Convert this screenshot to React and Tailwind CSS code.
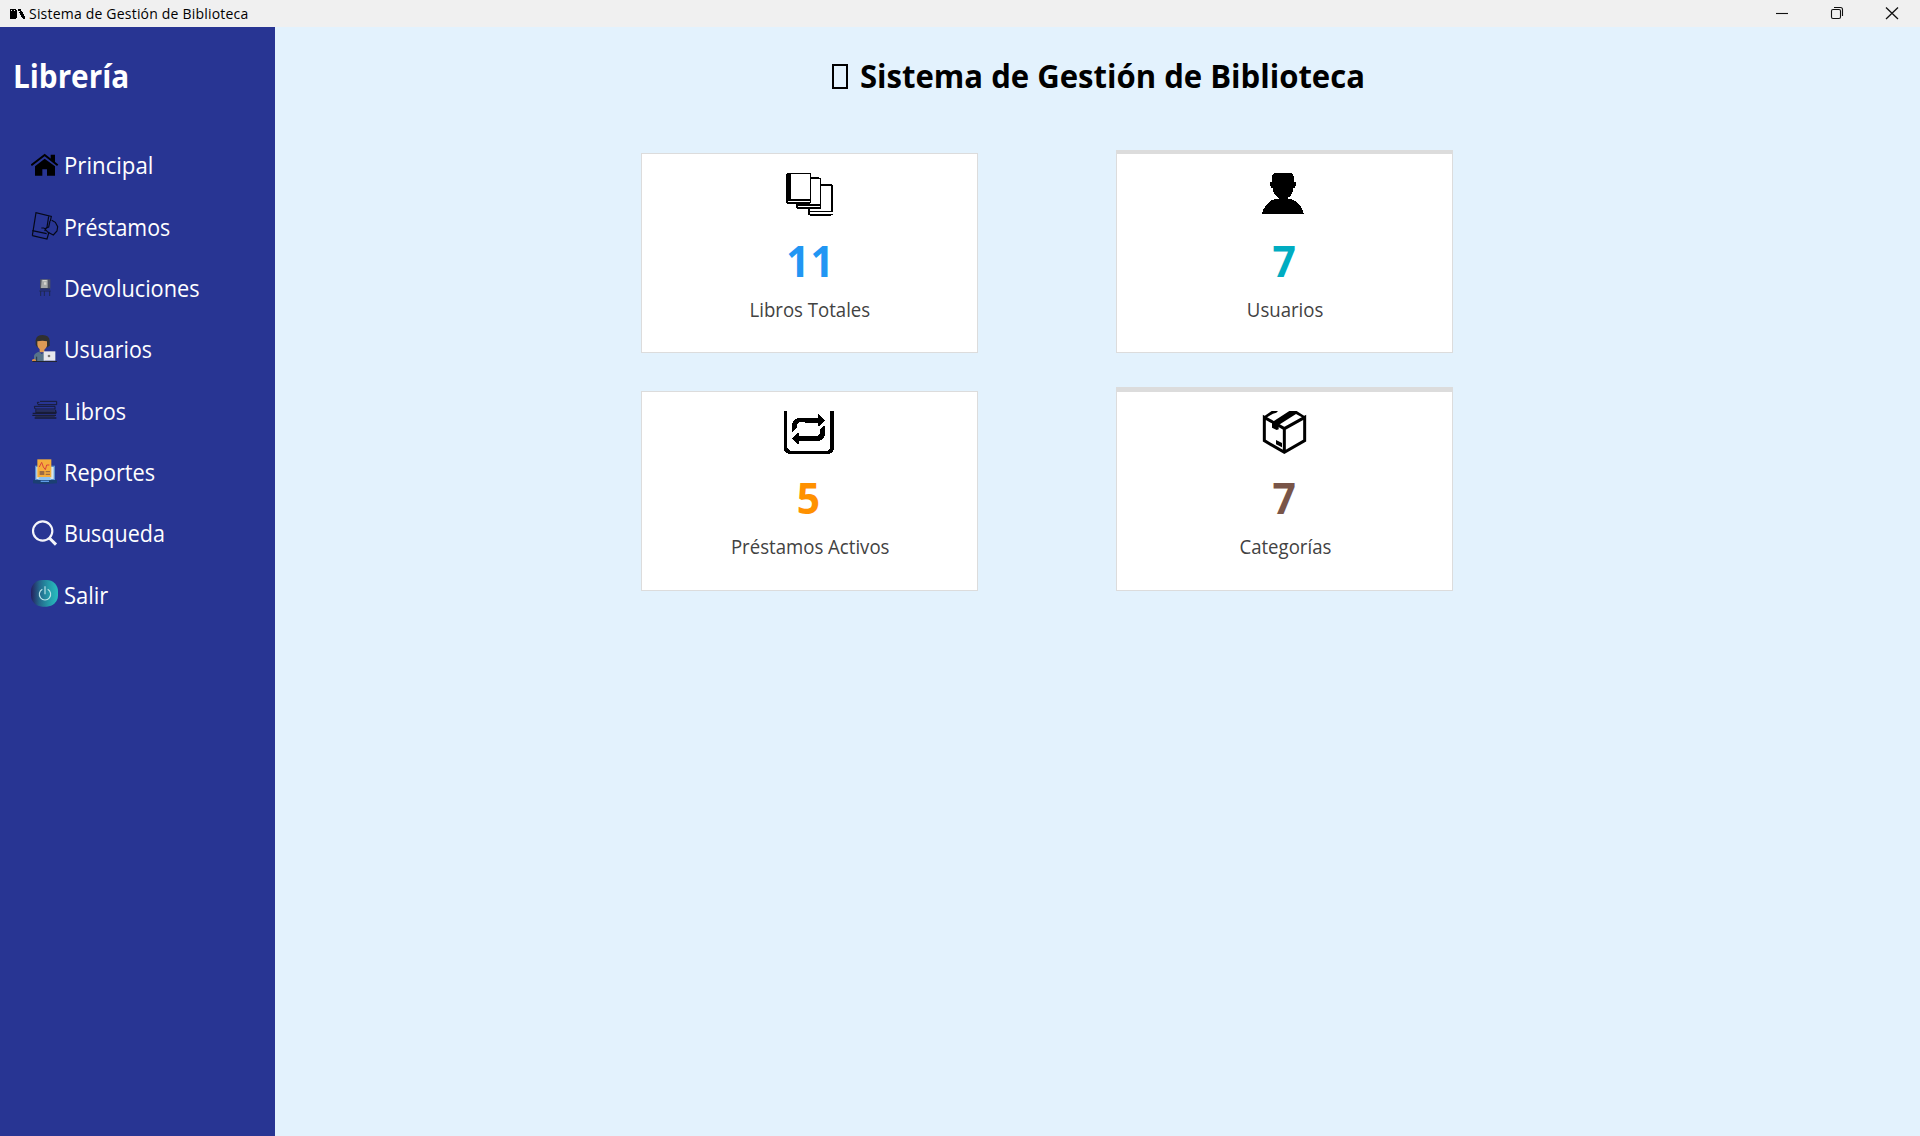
function HomeIcon() {
  return (
    <svg className="size-7 shrink-0" viewBox="93 33 84 84">
      <path d="M94 76 L134 45 L173 76" fill="none" stroke="#000" strokeWidth="6" />
      <path d="M152 44h13v24l-13-11z" />
      <path d="M105 79 L134 56 L165 79 V107 H141 V88 H127 V107 H105z" />
    </svg>
  );
}

function LoanIcon() {
  return (
    <svg className="size-7 shrink-0" viewBox="93 217 84 84" fill="none" stroke="#050818" strokeWidth="3.500">
      <path d="M97 288 L108 219 L154 230 L151 244" />
      <path d="M97 273 L140 282 M97 288 L141 298 L147 277" />
      <path d="M146 230 L141 262 L134 274 M124 265h9M150 244 l-4 18 -12 5 10 11 16 8 11-12 2-13-7-13-11-6" />
    </svg>
  );
}

function ReturnIcon() {
  return (
    <svg className="size-7 shrink-0" viewBox="93 401 84 84">
      <path d="M120 417h31v28h-31z" fill="#4f5362" />
      <path d="M125 418h18v25h-20z" fill="#a5a8a6" />
      <path d="M128 419h12v4h-12zM132 426h7v7h-7z" fill="#d6d5cd" />
      <path d="M120 446h30M118 452h34M122 452v15M133 452v15M149 452v15" fill="none" stroke="#1f2850" strokeWidth="3" />
    </svg>
  );
}

function UserIcon() {
  return (
    <svg className="size-7 shrink-0" viewBox="93 75 84 84">
      <path d="M107 105 V91 Q109 75 128 75 Q148 76 149 92 V106 L143 112 H112z" fill="#303030" />
      <path d="M112 94 Q128 90 141 94 V108 Q137 117 133 119 V127 H119 V118 Q112 112 112 104z" fill="#dc9a55" />
      <path d="M102 153 V137 Q104 129 117 125 L125 132 L135 125 V154z" fill="#57748a" />
      <path d="M96 154v-5l7-3 9 8z" fill="#d98d45" />
      <path d="M110 140v13" stroke="#263746" strokeWidth="3" />
      <path d="M131 124h35v28h-35z" fill="#e8e8ec" />
      <circle cx="147" cy="138" r="4" fill="#777" />
      <path d="M97 154.500h74" stroke="#222533" strokeWidth="3" />
    </svg>
  );
}

function BooksIcon() {
  return (
    <svg className="size-7 shrink-0" viewBox="93 259 84 84" fill="none" stroke="#171b36" strokeWidth="4">
      <path d="M120 275h50v10h-56l-2-7h6" strokeWidth="3" />
      <path d="M103 290h62v8h-60z" strokeWidth="3" />
      <path d="M166 300l2 8H108v-8M98 311h71M97 317h71M104 325h65" />
      <path d="M108 304h56M106 320h58" stroke="#262b4c" />
    </svg>
  );
}

function ReportIcon() {
  return (
    <svg className="size-7 shrink-0" viewBox="93 443 84 84">
      <path d="M105 466h60v43h-60z" fill="#5b8fd0" />
      <path d="M109 470h52v36h-52z" fill="#d5e4ee" />
      <path d="M112 447h42v54h-42z" fill="#f5ad3c" />
      <path d="M118 470l7-14 5 14 6 8 4-14h8" fill="none" stroke="#d9413c" strokeWidth="3" />
      <path d="M119 482h14v12h-14zM137 482h13v4h-13zM137 490h13v4h-13z" fill="#9a6b45" />
      <path d="M118 500h32l4 9h-40z" fill="#8ec1ee" />
      <path d="M99 509h72v10q-36 5-72 0z" fill="#1b3f73" />
      <path d="M122 511h25v4h-25z" fill="#5d9be8" />
    </svg>
  );
}

function SearchIcon() {
  return (
    <svg className="size-7 shrink-0" viewBox="93 117 84 84" fill="none" stroke="#f4f4fa">
      <circle cx="128" cy="153" r="29" strokeWidth="6.500" />
      <path d="M148 174 L168 194" strokeWidth="9" />
    </svg>
  );
}

function PowerIcon() {
  return (
    <svg className="size-7 shrink-0" viewBox="93 301 84 84">
      <defs>
        <linearGradient id="power" x1="0" x2="1" y1="0" y2="0">
          <stop offset="0" stopColor="#25205f" />
          <stop offset="0.3" stopColor="#24658a" />
          <stop offset="0.65" stopColor="#2599a8" />
          <stop offset="1" stopColor="#28bdc0" />
        </linearGradient>
      </defs>
      <rect x="93" y="301" width="81" height="80" rx="34" fill="url(#power)" />
      <path d="M127 329 A17 17 0 1 0 143 329 M135 320v24" fill="none" stroke="#b9e3e8" strokeWidth="3.500" />
    </svg>
  );
}

function StackIcon() {
  return (
    <svg className="h-11 w-[51px]" viewBox="462 99 153 132" shapeRendering="crispEdges">
      <path fillRule="evenodd" d="M471 99h72v90h-3v3h-69v-3h-3v-87h3z M483 102v75h57v-75z M474 183v3h66v-3z" />
      <path d="M543 111h24v3h6v93h-3V117h-27z" />
      <path d="M498 192h75v6h-69v3h69v3h-3v3h-69v-3h-3zM504 189h36v3h-36z" />
      <path d="M573 132h33v3h3v81h-6v-78h-30z" />
      <path d="M534 207h6v6h69v3h-69v6h69v3h-6v3h-63v-3h-6z" />
    </svg>
  );
}

function PersonIcon() {
  return (
    <svg className="h-11 w-[51px]" viewBox="462 99 153 132" shapeRendering="crispEdges">
      <path d="M507 99h52l5 5 3 10-1 10 7 4v8l-4 8-5 2v8l-7 13-9 7v3h11q28 9 38 45H471q8-34 38-45h13v-3l-12-9-6-13v-8l-5-1-4-9v-7l6-3v-15z" />
    </svg>
  );
}

function ExchangeIcon() {
  return (
    <svg className="h-11 w-[51px]" viewBox="462 93 153 132" shapeRendering="crispEdges">
      <path d="M462 93h9v111l9 9h111l9-8V93h12v114l-4 9-9 6H477l-12-7-3-7z" />
      <path d="M486 159v-27l6-12 12-6h60v-13l21 19-18 18h-3v-10h-38l-3-3h-10l-10 5-3 15-6 6z" />
      <path d="M486 176l18-18h3v10h56l6-6 1-14 12-10h3v28l-7 11-12 6h-59v9h-3z" />
    </svg>
  );
}

function BoxIcon() {
  return (
    <svg className="h-11 w-[51px]" viewBox="462 93 153 132">
      <path d="M514 132 L538 146 L599 112 V182 L538 217 L478 182 V112 L508 129 M538 146V218" fill="none" stroke="#000" strokeWidth="9" />
      <path d="M474 111 L500 93 H519 L514 98 L504 101 L484 113z" />
      <path d="M501 127 L553 93 H575 L603 111 L595 114 L573 102 L521 135 V148 L515 150 L501 143z" />
      <path d="M513 180l18 9v13l-18-9z" />
    </svg>
  );
}

const menu = [
  { label: "Principal", Icon: HomeIcon, fit: "scale-x-[0.965]" },
  { label: "Préstamos", Icon: LoanIcon, fit: "scale-x-[0.93]" },
  { label: "Devoluciones", Icon: ReturnIcon, fit: "scale-x-[0.945]" },
  { label: "Usuarios", Icon: UserIcon, fit: "scale-x-[0.93]" },
  { label: "Libros", Icon: BooksIcon, fit: "scale-x-[0.94]" },
  { label: "Reportes", Icon: ReportIcon, fit: "scale-x-[0.945]" },
  { label: "Busqueda", Icon: SearchIcon, fit: "scale-x-[0.935]" },
  { label: "Salir", Icon: PowerIcon, fit: "scale-x-[0.955]" },
];

const cards = [
  { label: "Libros Totales", value: "11", Icon: StackIcon, color: "text-[#2196f3] tracking-[1px] pl-0.5", frame: "h-[200px] border-t", gap: "mt-[22px]" },
  { label: "Usuarios", value: "7", Icon: PersonIcon, color: "text-[#00acc1]", frame: "h-[203px] border-t-4", gap: "mt-[22px]" },
  { label: "Préstamos Activos", value: "5", Icon: ExchangeIcon, color: "text-[#ff9100] pr-0.5", frame: "h-[200px] border-t", gap: "mt-[21px]" },
  { label: "Categorías", value: "7", Icon: BoxIcon, color: "text-[#795548]", frame: "h-[204px] border-t-5", gap: "mt-[21px]" },
];

function TitleBar() {
  return (
    <header className="flex h-[27px] shrink-0 items-center justify-between bg-[#f0f0f0] text-black">
      <div className="flex items-center">
        <svg className="ml-2 h-[27px] w-5" viewBox="24 0 60 81" shapeRendering="crispEdges">
          <path d="M30 27h18v3h3v24h-3v3H30zM54 27h9v6h3v9h3v6h3v6h3v3h-6v-3h-3v-3h-3v-6h-3v-6h-3v-6h-3z" />
          <path d="M33 30h3v3h-3zM42 30h3v3h-3zM57 33h3v3h-3z" fill="#f0f0f0" />
          <path d="M63 33h3v3h3v6h3v6h3v9h-6v-6h-3v-6h-3z" />
        </svg>
        <span className="ml-px text-sm leading-[27px] tracking-[0.2px] whitespace-nowrap">Sistema de Gestión de Biblioteca</span>
      </div>
      <svg className="h-[27px] w-[150px]" viewBox="0 0 150 27" fill="none" stroke="#111" strokeWidth="1.1">
        <path d="M6 13.500h12" />
        <rect x="61.500" y="9.500" width="9" height="9" rx="1.500" />
        <path d="M64 7.500h6.500a2 2 0 0 1 2 2V16" />
        <path d="M116 7.500 L128 19 M128 7.500 L116 19" strokeWidth="1.300" />
      </svg>
    </header>
  );
}

export default function App() {
  return (
    <div className="flex h-[1136px] w-[1920px] flex-col overflow-hidden font-['Open_Sans','Noto_Sans',sans-serif]">
      <TitleBar />
      <div className="flex flex-1">
        <aside className="w-[275px] bg-[#283593] text-white">
          <h1 className="ml-[13px] h-[69px] origin-left scale-x-[0.9] pt-[29px] text-[33px] leading-10 font-bold">Librería</h1>
          <nav className="mt-[38.33px] pl-[31px]">
            {menu.map(({ label, Icon, fit }) => (
              <a key={label} className="flex h-[61.333px] items-center gap-[5px]">
                <Icon />
                <span className={`origin-left pt-px text-[23px] leading-8 whitespace-nowrap ${fit}`}>{label}</span>
              </a>
            ))}
          </nav>
        </aside>
        <main className="flex-1 bg-[#e3f2fd]">
          <div className="flex h-[123px] pt-[29px] pl-[557px]">
            <span className="mt-2 h-[25px] w-4 border-2 border-black" />
            <h2 className="ml-3 h-10 origin-left scale-x-[0.941] text-[33px] leading-10 font-bold whitespace-nowrap text-black">Sistema de Gestión de Biblioteca</h2>
          </div>
          <section className="grid grid-cols-[337px_337px] items-end gap-x-[138px] gap-y-[34px] pl-[366px]">
            {cards.map(({ label, value, Icon, color, frame, gap }) => (
              <article key={label} className={`flex flex-col items-center border-x border-b border-[#dcdcdc] bg-white pt-[19px] ${frame}`}>
                <Icon />
                <p className={`scale-x-[0.95] text-[43px] leading-11 font-bold ${gap} ${color}`}>{value}</p>
                <p className="mt-[13px] scale-x-[0.93] pl-px text-xl leading-7 text-[#424242]">{label}</p>
              </article>
            ))}
          </section>
        </main>
      </div>
    </div>
  );
}
